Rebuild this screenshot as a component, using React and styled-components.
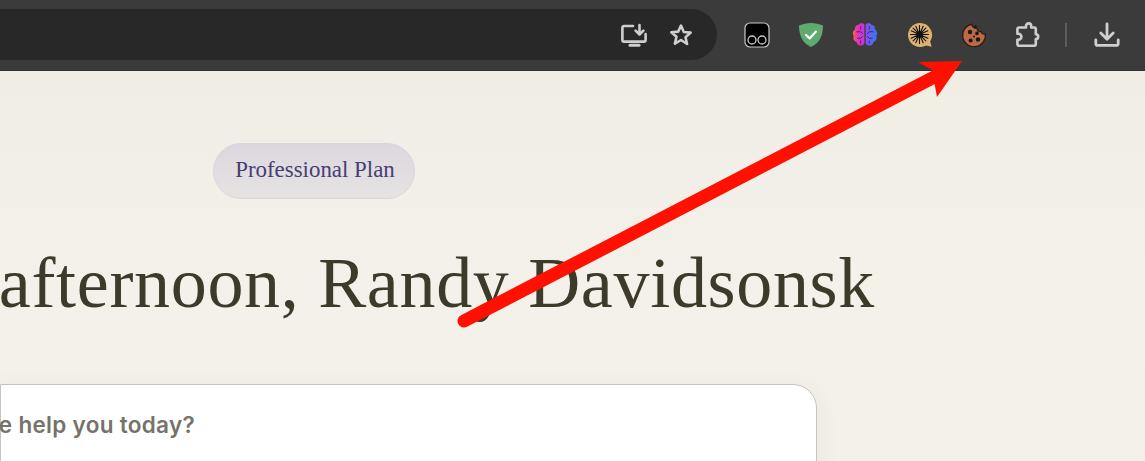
import styled, { createGlobalStyle } from "styled-components";

const GlobalStyle = createGlobalStyle`
  html, body {
    margin: 0;
    padding: 0;
    background: #f1eee7;
  }
`;

const Page = styled.div`
  position: relative;
  width: 1145px;
  height: 461px;
  overflow: hidden;
`;

const Toolbar = styled.div`
  display: flex;
  align-items: center;
  height: 71px;
  background: #3b3b3b;
  border-bottom: 1px solid #333;
  box-sizing: border-box;
`;

const Omnibox = styled.div`
  display: flex;
  align-items: center;
  justify-content: flex-end;
  gap: 22px;
  flex: none;
  box-sizing: border-box;
  width: 717px;
  height: 51px;
  margin-top: -1px;
  padding-right: 24px;
  background: #282828;
  border-radius: 0 26px 26px 0;
`;

const Extensions = styled.div`
  display: flex;
  align-items: center;
  margin-left: 27px;
  gap: 28.2px;
`;

const Separator = styled.div`
  width: 2px;
  height: 24px;
  background: #5c5c5c;
  margin: 0 -1px 0 -4px;
`;

const Main = styled.main`
  height: 390px;
  background: linear-gradient(180deg, #f0ede5 0%, #f3f1ea 55%, #f2f0e9 100%);
  overflow: hidden;
`;

const PlanBadge = styled.div`
  box-sizing: border-box;
  width: 202px;
  height: 56px;
  margin: 72px 0 0 213px;
  padding: 0 0 3px 2px;
  display: flex;
  align-items: center;
  justify-content: center;
  border-radius: 28px;
  border: 1px solid #d9d5e0;
  background: linear-gradient(180deg, #dcd7de 0%, #e6e3e3 100%);
  color: #473d73;
  font-family: "Liberation Serif", serif;
  font-size: 22.9px;
`;

const TitleRow = styled.div`
  display: flex;
  justify-content: flex-end;
  width: 875px;
  margin-top: 40px;
`;

const Title = styled.h1`
  flex: none;
  margin: 0;
  white-space: nowrap;
  color: #3d3a2a;
  font-family: "Liberation Serif", serif;
  font-weight: 400;
  font-size: 72px;
  line-height: 88px;
  letter-spacing: 0.68px;
`;

const PromptBox = styled.div`
  box-sizing: border-box;
  width: 817px;
  height: 140px;
  margin-top: 57px;
  display: flex;
  justify-content: flex-end;
  padding: 26px 621px 0 0;
  background: #fff;
  border: 1px solid #c6c4bd;
  border-radius: 0 24px 0 0;
  box-shadow: 0 4px 24px rgba(80, 70, 50, 0.06);
`;

const Placeholder = styled.span`
  flex: none;
  white-space: nowrap;
  color: #76736a;
  font-family: Inter, sans-serif;
  font-weight: 600;
  font-size: 22.5px;
  line-height: 28px;
  letter-spacing: 0.3px;
`;

const ArrowOverlay = styled.svg`
  position: absolute;
  top: 0;
  left: 0;
  pointer-events: none;
`;

const stroke = {
  fill: "none",
  stroke: "#cfcfcf",
  strokeWidth: 2.6,
  strokeLinecap: "round",
  strokeLinejoin: "round",
};

const InstallIcon = () => (
  <svg width="26" height="24" viewBox="0 0 26 24">
    <path {...stroke} d="M12 3H3a1.6 1.6 0 0 0-1.6 1.6V17A1.6 1.6 0 0 0 3 18.6h20a1.6 1.6 0 0 0 1.6-1.6V11" />
    <path {...stroke} d="M18.5 2v9M14.6 7.6l3.9 3.9 3.9-3.9" />
    <path {...stroke} d="M9 22.2h9" strokeWidth="3" />
  </svg>
);

const StarIcon = () => (
  <svg width="24" height="24" viewBox="0 0 24 24">
    <path {...stroke} d="M12 2.6l2.8 6.4 6.9.6-5.2 4.6 1.6 6.8L12 17l-6.1 3.6 1.6-6.8-5.2-4.6 6.9-.6z" />
  </svg>
);

const GhosteryIcon = () => (
  <svg width="26" height="26" viewBox="0 0 26 26">
    <rect x="1" y="1" width="24" height="24" rx="5" fill="#000" stroke="#c9c9c9" strokeWidth="1.2" />
    <circle cx="8" cy="18" r="4" fill="none" stroke="#c9c9c9" strokeWidth="1.3" />
    <circle cx="18" cy="18" r="4" fill="none" stroke="#c9c9c9" strokeWidth="1.3" />
  </svg>
);

const ShieldIcon = () => (
  <svg width="26" height="26" viewBox="0 0 26 26">
    <path d="M13 1C9 1 5 2 1 3.5 1 13 4 21 13 25 22 21 25 13 25 3.5 21 2 17 1 13 1z" fill="#5eaa6f" />
    <path d="M8 13l3.6 3.4L18 9.6" fill="none" stroke="#fff" strokeWidth="2.2" strokeLinecap="round" strokeLinejoin="round" />
  </svg>
);

const BrainIcon = () => (
  <svg width="26" height="26" viewBox="1 1 24 24">
    <defs>
      <linearGradient id="brainLeft" x1="0" y1="0" x2="1" y2="0">
        <stop offset="0" stopColor="#f2683c" />
        <stop offset="0.5" stopColor="#e22fc0" />
        <stop offset="1" stopColor="#c23be0" />
      </linearGradient>
      <linearGradient id="brainRight" x1="0" y1="0" x2="1" y2="0">
        <stop offset="0" stopColor="#8d4cf0" />
        <stop offset="1" stopColor="#2f7cf0" />
      </linearGradient>
    </defs>
    <path d="M12.4 3.4C11 1.8 8 1.8 6.8 3.8 4.6 3.8 3.4 6 4 7.8 1.8 9 1 12 2.6 14 1.6 16.4 3 19 5.2 19.4 5.6 22 8.6 23.6 10.6 22.4c.9-.4 1.8-1 1.8-2z" fill="url(#brainLeft)" />
    <path d="M13.6 3.4C15 1.8 18 1.8 19.2 3.8 21.4 3.8 22.6 6 22 7.8 24.2 9 25 12 23.4 14 24.4 16.4 23 19 20.8 19.4 20.4 22 17.4 23.6 15.4 22.4c-.9-.4-1.8-1-1.8-2z" fill="url(#brainRight)" />
    <path d="M5 10h4l2 2M6 16h3l2-2M21 10h-4l-2 2M20 16h-3l-2-2M9 5v3M17 5v3M9 21v-3M17 21v-3" fill="none" stroke="#3d2a6e" strokeWidth="0.9" />
  </svg>
);

const BubbleIcon = () => (
  <svg width="26" height="26" viewBox="0 0 26 26">
    <path d="M13 1a12 12 0 1 0 6 22.4l5.6 1.4-1.4-5.4A12 12 0 0 0 13 1z" fill="#dcb26f" />
    <circle cx="12.5" cy="12.5" r="3.2" fill="#111" />
    <path d="M12.5 3.5v18M3.5 12.5h18M6.2 6.2l12.6 12.6M18.8 6.2L6.2 18.8M8.8 4.2l7.4 16.6M16.2 4.2L8.8 20.8M4.2 8.8l16.6 7.4M20.8 8.8L4.2 16.2" stroke="#111" strokeWidth="1.1" strokeLinecap="round" />
  </svg>
);

const CookieIcon = () => (
  <svg width="26" height="26" viewBox="0 0 26 26">
    <path d="M10.5 2.2a11.4 11.4 0 1 0 13.8 9.6c-2 .8-3.8-.2-4.2-2.2-2.4.4-4.2-1.2-4-3.4-2.6.2-4.8-1.4-5.6-4z" fill="#b86b45" stroke="#2a1a12" strokeWidth="1.2" />
    <circle cx="9" cy="10" r="2.2" fill="#1e1512" />
    <circle cx="16" cy="11.4" r="1.8" fill="#1e1512" />
    <circle cx="17" cy="17.5" r="2.2" fill="#1e1512" />
    <circle cx="9.6" cy="18.4" r="2" fill="#1e1512" />
    <circle cx="13" cy="14.6" r="1" fill="#1e1512" />
    <circle cx="14.5" cy="4.4" r="1.2" fill="#1e1512" />
  </svg>
);

const PuzzleIcon = () => (
  <svg width="26" height="26" viewBox="0 0 26 26">
    <path {...stroke} d="M8 5.5h3V4a2.6 2.6 0 0 1 5.2 0v1.5h3a1.6 1.6 0 0 1 1.6 1.6v5.2a2.4 2.4 0 0 1 0 4.8v5a1.6 1.6 0 0 1-1.6 1.6H4a1.6 1.6 0 0 1-1.6-1.6v-4.4h1a3 3 0 0 0 0-6h-1V7.1A1.6 1.6 0 0 1 4 5.5z" />
  </svg>
);

const DownloadIcon = () => (
  <svg width="26" height="26" viewBox="0 0 26 26">
    <path {...stroke} d="M13 2v15M6.8 11l6.2 6.2 6.2-6.2" strokeWidth="2.8" />
    <path {...stroke} d="M1.8 18v3.4a2 2 0 0 0 2 2h18.4a2 2 0 0 0 2-2V18" strokeWidth="2.8" />
  </svg>
);

export default function App() {
  return (
    <>
      <GlobalStyle />
      <Page>
        <Toolbar>
          <Omnibox>
            <InstallIcon />
            <StarIcon />
          </Omnibox>
          <Extensions>
            <GhosteryIcon />
            <ShieldIcon />
            <BrainIcon />
            <BubbleIcon />
            <CookieIcon />
            <PuzzleIcon />
            <Separator />
            <DownloadIcon />
          </Extensions>
        </Toolbar>
        <Main>
          <PlanBadge>Professional Plan</PlanBadge>
          <TitleRow>
            <Title>Good afternoon, Randy Davidsonsk</Title>
          </TitleRow>
          <PromptBox>
            <Placeholder>How can we help you today?</Placeholder>
          </PromptBox>
        </Main>
        <ArrowOverlay width="1145" height="461" viewBox="0 0 1145 461">
          <path d="M464 321L940 74" fill="none" stroke="#ff1000" strokeWidth="13" strokeLinecap="round" />
          <path d="M962 61L918 62L932 70L937 97z" fill="#ff1000" />
        </ArrowOverlay>
      </Page>
    </>
  );
}
